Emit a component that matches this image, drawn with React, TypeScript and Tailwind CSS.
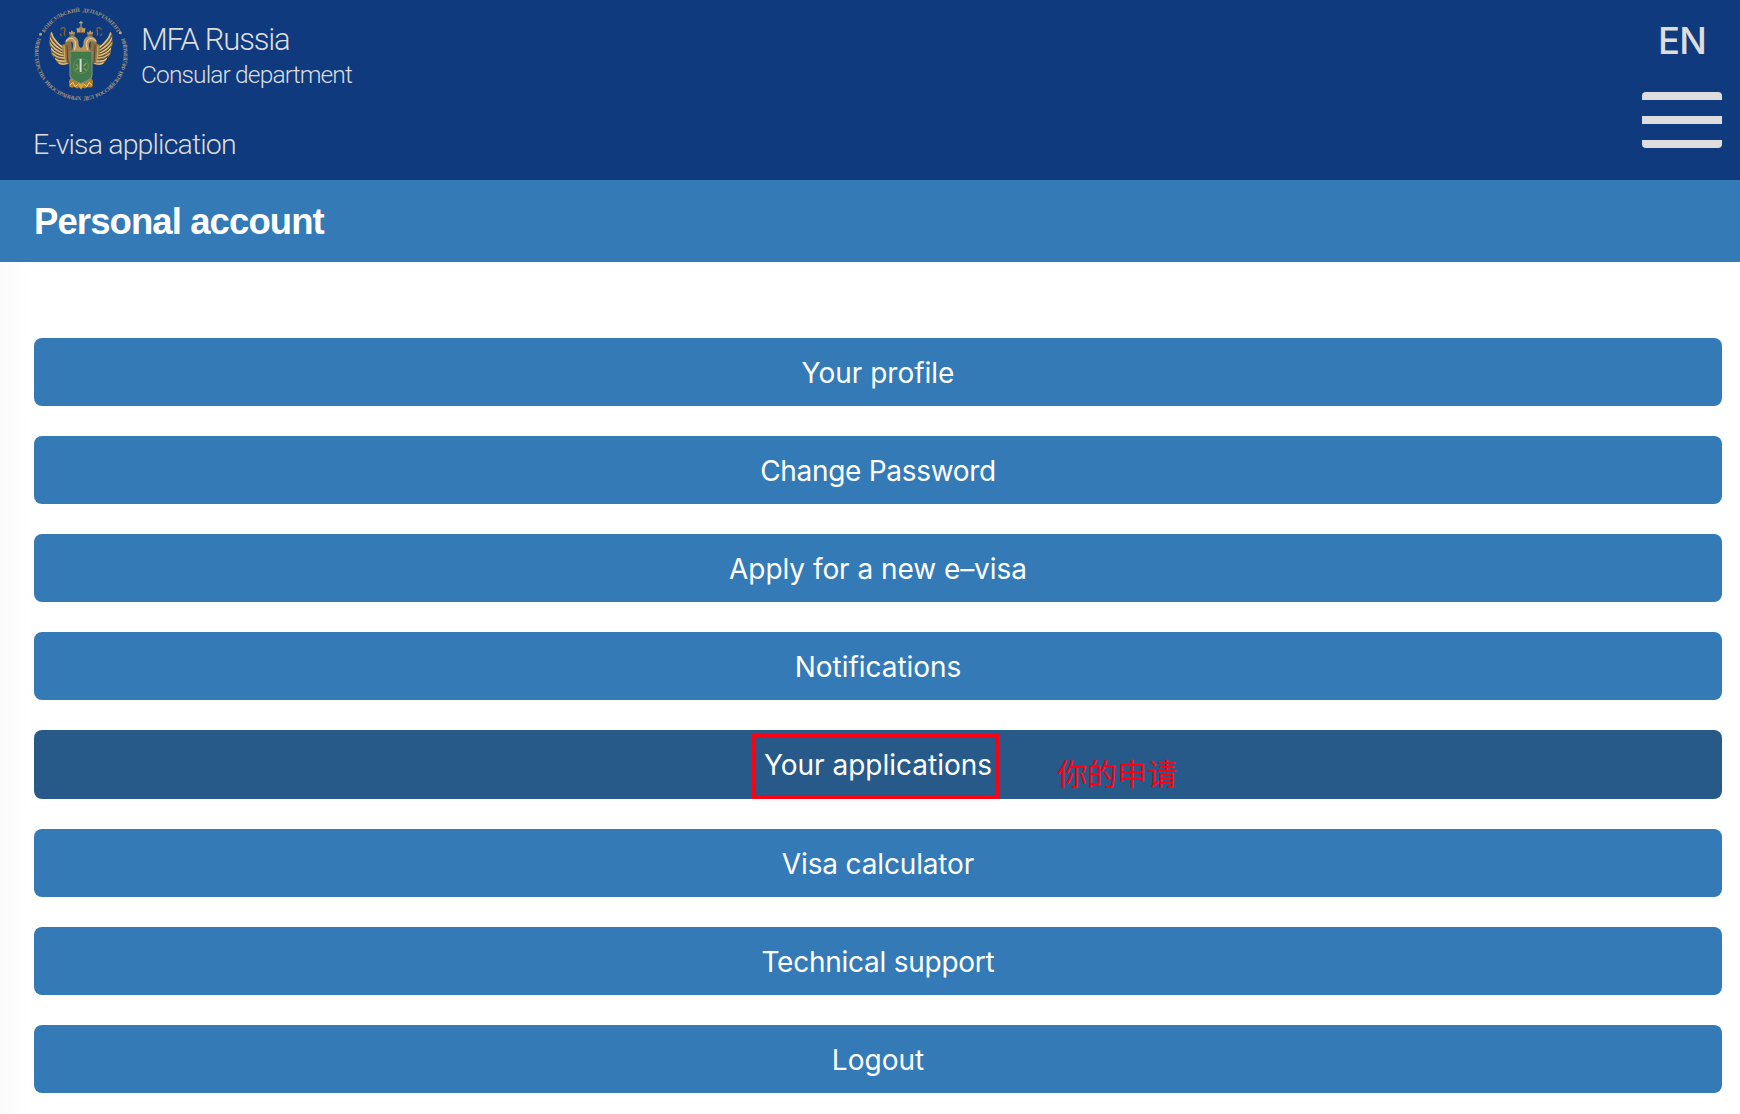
const menu: { label: string; active?: boolean; tracking?: string }[] = [
  { label: "Your profile" },
  { label: "Change Password", tracking: "tracking-[-0.3px]" },
  { label: "Apply for a new e–visa", tracking: "tracking-[-0.05px]" },
  { label: "Notifications", tracking: "tracking-[-0.05px]" },
  { label: "Your applications", active: true },
  { label: "Visa calculator", tracking: "tracking-[-0.15px]" },
  { label: "Technical support", tracking: "tracking-[-0.25px]" },
  { label: "Logout" },
];

function Wing() {
  return (
    <g>
      <path
        d="M37 30 C32 37 29 38 26 38 C22 35 18 30 17.500 24.500 C15.500 27 15 30 16 32 C14.500 35 15.500 39 17 41 C16.500 46 18 49 21 51 C22 55 25 58 29 58 L35 57 L38 44 Z"
        fill="#8f7040"
      />
      <g fill="none" strokeLinecap="round" strokeWidth="1.3" stroke="#e2c88e">
        <path d="M17.500 26 C18.500 31 22 35 28 40" />
        <path d="M16.400 31 C18 36 22 39.500 28 43" />
        <path d="M16.600 36 C18.500 40.500 22 43 28 46" />
        <path d="M17.500 41.500 C20 45 23 47 29 48.500" />
        <path d="M19 46.500 C22 49.500 25 50.500 30 51" />
        <path d="M21.500 51.500 C24 54 27 54.500 31 54" />
        <path d="M25 56 C27.500 57.500 30 57.500 33 56.500" />
        <path d="M30 39 L31 55" stroke="#cda85d" />
      </g>
      <g fill="none" strokeWidth="0.8" stroke="#4a3d2a">
        <path d="M16.500 28.500 C18 34 22 37.500 28 42" />
        <path d="M16.300 34 C18 38.500 22 41.500 28 44.600" />
        <path d="M17 39.500 C19 43 22.500 45.500 28.500 47.300" />
        <path d="M18 44.500 C21 48 24 49.500 29.500 49.900" />
        <path d="M20 49.500 C23 52.500 26 53 30.500 52.500" />
        <path d="M33 38 L34 56" />
      </g>
      <path d="M47 47 H38 C37.500 43 39.500 40 39 37 C38.500 34 36.500 33.500 33.500 34.800 L31.500 36 L31.300 34 C32.500 31 35 29 38.500 29 C42.500 29.500 44.500 32.500 44.500 36 C44.500 39 45.500 40 47 41 Z" fill="#b3945a" />
      <path d="M32 34 L35.500 31.500 C39.500 30.500 42 34 41.500 38 L40.500 43" fill="none" stroke="#ead7a8" strokeWidth="1" />
      <path d="M35.800 28.500 L34.800 24.500 L36.500 25.500 L37.800 23 L39.300 25.500 L41 24.800 L40.300 28.800 Z" fill="#b99a62" />
      <path d="M36 27.800 H40.300" stroke="#5c4930" strokeWidth="0.700" />
      <path d="M26.500 22.500 C28 19.500 31.500 20.500 31 23 C30.500 25 29.500 26 31 28.500 M26 26.500 L27.500 29" fill="none" stroke="#8c6238" strokeWidth="1.300" />
      <path d="M38 71 C35 72 34.500 75 35.500 77 C34 79.500 37 81.500 40 80 L43 81.500 L46 80 L43 75 Z" fill="#b57f2a" />
      <path d="M36 78 L39 75.500 L41 79.500 L44 77.500" fill="none" stroke="#f0cf7c" strokeWidth="1" />
    </g>
  );
}

function Emblem() {
  return (
    <svg viewBox="0 0 94 94" className="h-[94px] w-[94px] shrink-0" aria-hidden="true">
      <defs>
        <path id="ringTop" d="M5 47 A42 42 0 0 1 89 47" />
        <path id="ringBottom" d="M8 22 A46.300 46.300 0 1 0 86 22" />
      </defs>
      <g fill="#a0937a" className="font-['Liberation_Serif'] text-[5.6px] font-bold [word-spacing:1.5px]">
        <text>
          <textPath href="#ringTop" startOffset="50%" textAnchor="middle" textLength="88">
            КОНСУЛЬСКИЙ ДЕПАРТАМЕНТ
          </textPath>
        </text>
        <text>
          <textPath href="#ringBottom" startOffset="50%" textAnchor="middle" textLength="178">
            МИНИСТЕРСТВА ИНОСТРАННЫХ ДЕЛ РОССИЙСКОЙ ФЕДЕРАЦИИ
          </textPath>
        </text>
      </g>
      <circle cx="6.500" cy="27.300" r="1.500" fill="#bfa468" />
      <circle cx="86.300" cy="25.800" r="1.500" fill="#bfa468" />
      <Wing />
      <g transform="matrix(-1 0 0 1 94 0)">
        <Wing />
      </g>
      <path d="M47 14 V19 M45 15.800 H49" stroke="#cbb27c" strokeWidth="1" />
      <path d="M43.200 26 L42.500 20.800 L44.500 21.500 L47 18.800 L49.500 21.500 L51.500 20.800 L50.800 26 Z" fill="#b99c68" />
      <path d="M47 19 V26 M43.500 25.500 H50.500" stroke="#6b5638" strokeWidth="0.800" />
      <path d="M43 74 L47 71 L51 74 L49 80 L47 82.500 L45 80 Z" fill="#d9a437" />
      <path d="M36 44.500 H58 V68 C58 73 52 74 47 76.500 C42 74 36 73 36 68 Z" fill="#427a4c" stroke="#7d8c78" strokeWidth="1.200" />
      <circle cx="47" cy="59" r="7.500" fill="none" stroke="#6d8a55" strokeWidth="0.900" />
      <path d="M41.500 63 L44.500 60.500 M49.500 59 L52.500 56 M42 57 L44 59.500 M50 61 L52.500 64" stroke="#8fa35c" strokeWidth="1.100" />
      <path d="M46.600 52 V65" stroke="#d8e2da" strokeWidth="1.900" />
    </svg>
  );
}

export default function App() {
  return (
    <div className="h-[1114px] w-[1740px] overflow-hidden bg-white font-[Inter,sans-serif]">
      <header className="flex h-[180px] justify-between bg-[#103a7e] pl-[34px] pr-[18px] font-[Roboto,sans-serif] font-light text-[#dddddd]">
        <div className="flex flex-col pt-[7px]">
          <div className="flex">
            <Emblem />
            <div className="flex flex-col pt-[15px] pl-[13px]">
              <div className="text-[31px] leading-[36px] tracking-[-1.2px]">MFA Russia</div>
              <div className="pt-[1px] text-[24.5px] leading-[32px] tracking-[-0.86px]">Consular department</div>
            </div>
          </div>
          <div className="-ml-px mt-[26px] text-[28.5px] leading-[36px] tracking-[-0.85px]">E-visa application</div>
        </div>
        <div className="flex w-20 flex-col items-center pt-[20px]">
          <div className="font-[Inter,sans-serif] text-[36.5px] leading-[42px] font-medium tracking-[-0.8px]">EN</div>
          <button aria-label="Menu" className="mt-[30px] flex h-14 w-20 flex-col justify-between">
            <span className="h-2 w-full rounded-t-[4px] bg-[#dddddd]" />
            <span className="h-2 w-full bg-[#dddddd]" />
            <span className="h-2 w-full rounded-b-[4px] bg-[#dddddd]" />
          </button>
        </div>
      </header>
      <div className="flex h-[82px] items-center bg-[#337ab7] pt-[2px] pl-[34px]">
        <h1 className="font-['Liberation_Sans',sans-serif] text-[36.5px] leading-[40px] font-bold tracking-[-0.9px] text-white">
          Personal account
        </h1>
      </div>
      <nav className="flex flex-col gap-[30px] bg-linear-to-r from-[#fbfbfb] to-white to-[30px] pt-[76px] pr-[18px] pb-[21px] pl-[34px]">
        {menu.map((item) => (
          <a
            key={item.label}
            className={`relative block rounded-lg text-center text-[28px] leading-[70px] text-white ${
              item.active ? "h-[69px] bg-[#275a88]" : "h-[68px] bg-[#337ab7]"
            } ${item.tracking ?? ""}`}
          >
            {item.label}
            {item.active && (
              <>
                <span className="absolute top-1 left-[718px] h-[65px] w-[247px] border-4 border-[#ff0013]" />
                <span className="absolute top-[24px] left-[1023px] font-['Noto_Sans_CJK_SC',sans-serif] text-[30px] leading-9 tracking-normal whitespace-nowrap text-[#ff0013]">
                  你的申请
                </span>
              </>
            )}
          </a>
        ))}
      </nav>
    </div>
  );
}
